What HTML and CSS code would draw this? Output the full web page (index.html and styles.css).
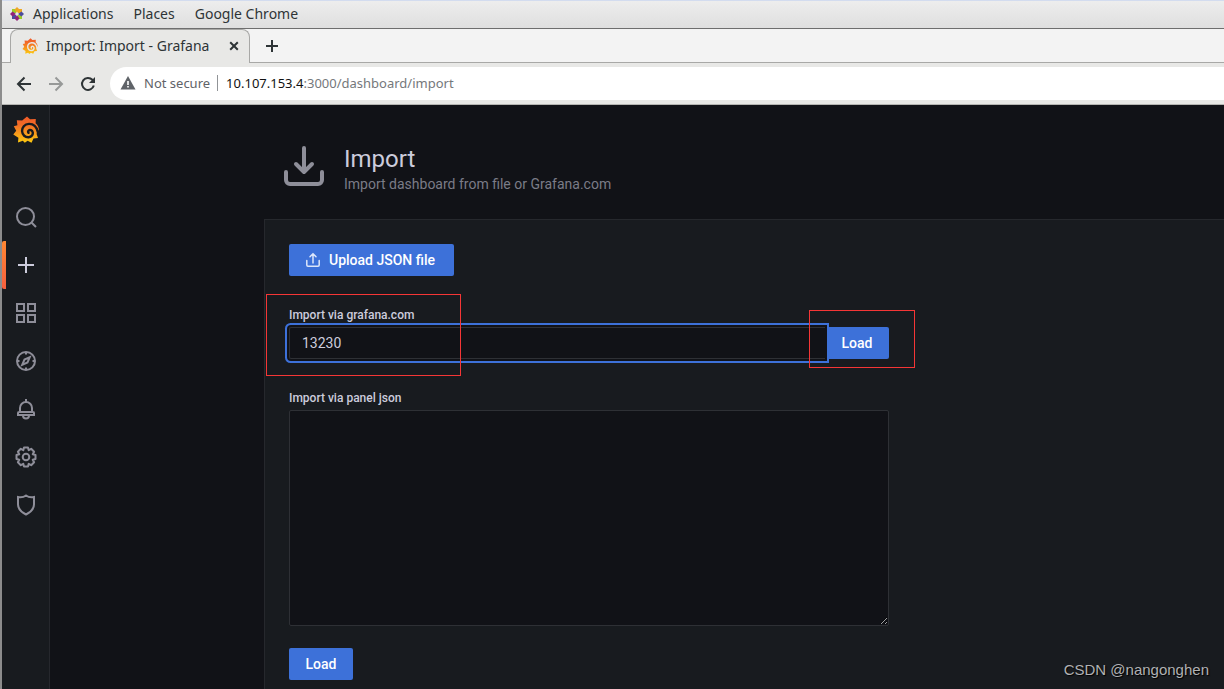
FILE: index.html
```html
<!DOCTYPE html>
<html lang="en">
<head>
<meta charset="utf-8">
<title>Import: Import - Grafana</title>
<link rel="stylesheet" href="styles.css">
</head>
<body>
<svg class="defs" width="0" height="0" aria-hidden="true">
  <defs>
    <linearGradient id="flame" x1="0" y1="0" x2="0" y2="1"><stop offset="0" stop-color="#f05a28"/><stop offset=".3" stop-color="#f26b27"/><stop offset="1" stop-color="#fcc90f"/></linearGradient>
    <symbol id="grafana" viewBox="0 0 26 27">
      <path fill="url(#flame)" d="M14 0.5 17 3.2 22.8 3 22.6 7.2C24.8 9.3 26 11.6 25.9 14.6L24.4 14.5 23.6 18 25 22 20.5 22.5 18.5 26.7 14.6 24.8 11.8 26.8 9.8 24.8 5 26.4 5.4 21.8 0.3 18.4 3.2 14.8 0.8 10.2 4.4 9.2 3.8 4.3 9.2 4.6Z"/>
      <path class="spiral" d="M25 16.500C23.700 10.500 20 7.800 16 7.900 11.500 8.100 8.900 11.500 9.100 15.200 9.300 19 12.300 21.500 15.700 21.200 18.700 20.900 20.200 18.600 19.700 16.300 19.200 14.200 16.900 13.400 15.600 14.600 14.800 15.400 15 16.300 15.500 16.800"/>
    </symbol>
  </defs>
</svg>

<div class="desktop">
  <header class="desktop-bar">
    <svg class="distro" viewBox="0 0 14 14" aria-hidden="true">
      <path fill="#9ccd2a" d="M2 2h4v4H2z"/><path fill="#efa724" d="M8 2h4v4H8z"/><path fill="#4d4c9c" d="M2 8h4v4H2z"/><path fill="#9ccd2a" d="M8 8h4v4H8z"/>
      <path fill="#efa724" d="m7 0 2.500 2.500L7 6 4.500 2.500z"/><path fill="#4d4c9c" d="m14 7-2.500 2.500L8 7l3.500-2.500z"/><path fill="#932279" d="m7 14-2.500-2.500L7 8l2.500 3.500z"/><path fill="#932279" d="m0 7 2.500-2.500L6 7 2.500 9.500z"/>
    </svg>
    <nav class="desktop-menu">
      <a href="#apps">Applications</a><a href="#places">Places</a><a href="#chrome">Google Chrome</a>
    </nav>
  </header>

  <div class="tab-strip">
    <div class="tab">
      <svg class="favicon" aria-hidden="true"><use href="#grafana"/></svg>
      <span class="tab-title">Import: Import - Grafana</span>
      <button class="plain" type="button" aria-label="Close tab"><svg width="10" height="10" viewBox="0 0 10 10"><path d="m1.200 1.200 7.600 7.600m0-7.600L1.200 8.800"/></svg></button>
    </div>
    <button class="plain new-tab" type="button" aria-label="New tab"><svg width="12" height="12" viewBox="0 0 12 12"><path d="M6 0v12M0 6h12"/></svg></button>
  </div>

  <div class="toolbar">
    <button class="plain" type="button" aria-label="Back"><svg width="16" height="16" viewBox="0 0 16 16"><path d="M15 8H2m6.500-6.500L2 8l6.500 6.500"/></svg></button>
    <button class="plain faded" type="button" aria-label="Forward"><svg width="16" height="16" viewBox="0 0 16 16"><path d="M1 8h13M7.500 1.500 14 8l-6.500 6.500"/></svg></button>
    <button class="plain" type="button" aria-label="Reload"><svg width="16" height="16" viewBox="0 0 16 16"><path d="M13.800 9.500A6 6 0 1 1 12.400 3.800l1.500 1.500"/><path class="solid" d="M15 1v6H9z"/></svg></button>
    <div class="address">
      <svg width="16" height="14" viewBox="0 0 16 14" aria-hidden="true"><path fill="#5f6368" d="M8 0 15.500 13.500H.5z"/><path fill="#fff" d="M7.200 5h1.600v4H7.200zm0 5h1.600v1.600H7.200z"/></svg>
      <span class="security">Not secure</span>
      <span class="url"><b>10.107.153.4</b>:3000/dashboard/import</span>
    </div>
  </div>

  <div class="app">
    <nav class="sidebar" aria-label="Main">
      <a class="brand" href="#home" aria-label="Home"><svg width="26" height="27"><use href="#grafana"/></svg></a>
      <a href="#search" aria-label="Search"><svg viewBox="0 0 24 24"><circle cx="11.500" cy="11.500" r="8.500"/><path d="m17.700 17.700 4.300 4.300"/></svg></a>
      <a class="current" href="#create" aria-label="Create"><svg viewBox="0 0 24 24"><path d="M12 4v16M4 12h16"/></svg></a>
      <a href="#dashboards" aria-label="Dashboards"><svg viewBox="0 0 24 24"><path d="M3 3h7v7H3zM14 3h7v7h-7zM3 14h7v7H3zM14 14h7v7h-7z"/></svg></a>
      <a href="#explore" aria-label="Explore"><svg viewBox="0 0 24 24"><circle cx="12" cy="12" r="9"/><path d="M12 3v2.500M12 18.500V21M3 12h2.500M18.500 12H21M15.800 8.200l-2.300 5.300-5.300 2.300 2.300-5.300z"/></svg></a>
      <a href="#alerting" aria-label="Alerting"><svg viewBox="0 0 24 24"><path d="M12 2v3M6 15v-4a6 6 0 0 1 12 0v4M5 15h14a1 1 0 0 1 1 1v2H4v-2a1 1 0 0 1 1-1zM9 18.500a3 3 0 0 0 6 0"/></svg></a>
      <a href="#configuration" aria-label="Configuration"><svg viewBox="0 0 24 24"><circle cx="12" cy="12" r="3.300"/><path stroke-linejoin="round" d="M10 2.500h4l.7 2.700 2.500-1.400 2.900 2.900-1.400 2.500 2.800.8v4l-2.800.8 1.400 2.500-2.900 2.900-2.500-1.400-.7 2.700h-4l-.7-2.700-2.500 1.400-2.900-2.900 1.400-2.500-2.800-.8v-4l2.800-.8-1.400-2.500 2.900-2.900 2.500 1.400z"/></svg></a>
      <a href="#admin" aria-label="Server admin"><svg viewBox="0 0 24 24"><path d="M4 4q4.500 1 8-1.500Q15.500 5 20 4v7.500c0 4.500-3 7.500-8 10-5-2.500-8-5.500-8-10z"/></svg></a>
    </nav>

    <main class="page">
      <header class="page-header">
        <svg width="40" height="40" viewBox="0 0 40 40" aria-hidden="true"><path d="M20 2v22M12 18l8 8 8-8M2 26v8a4 4 0 0 0 4 4h28a4 4 0 0 0 4-4v-8"/></svg>
        <div>
          <h1>Import</h1>
          <p>Import dashboard from file or Grafana.com</p>
        </div>
      </header>
      <form class="panel">
        <button class="primary upload" type="button"><svg width="16" height="16" viewBox="0 0 16 16" aria-hidden="true"><path d="M8 11V2M5 4.700 8 1.700l3 3M1.800 8.500V13a1.200 1.200 0 0 0 1.200 1.200h10a1.200 1.200 0 0 0 1.200-1.200V8.500"/></svg>Upload JSON file</button>
        <div class="field">
          <label for="dashboard-id">Import via grafana.com</label>
          <div class="input-row">
            <input id="dashboard-id" type="text" value="13230">
            <button class="primary" type="button">Load</button>
          </div>
          <span class="mark mark-id"></span>
          <span class="mark mark-load"></span>
        </div>
        <div class="field">
          <label for="panel-json">Import via panel json</label>
          <textarea id="panel-json"></textarea>
        </div>
        <button class="primary" type="button">Load</button>
      </form>
    </main>
  </div>
</div>
<div class="watermark">CSDN @nangonghen</div>
</body>
</html>
```
FILE: styles.css
```css
* { box-sizing: border-box; }

body {
  margin: 0;
  background: #111217;
  color: #ccccdc;
  font: 14px/20px Roboto, sans-serif;
}

svg { display: block; flex: none; }
.defs { position: absolute; }
a { color: inherit; text-decoration: none; }

.spiral { fill: none; stroke: var(--hole, #181b1f); stroke-width: 2.4; stroke-linecap: round; }

.desktop {
  display: flex;
  flex-direction: column;
  height: 100vh;
  overflow: hidden;
  border-left: 2px solid #8c8c8c;
}

.desktop-bar {
  display: flex;
  flex: none;
  align-items: center;
  gap: 9px;
  height: 29px;
  padding: 0 0 2px 8px;
  background: linear-gradient(#ededed, #dfdfdf);
  border-top: 1px solid #d3dcef;
  border-bottom: 1px solid #6e6e6e;
  color: #2e3436;
  font: 14px/20px "Noto Sans", sans-serif;
}
.distro { width: 14px; height: 14px; }
.desktop-menu { display: flex; gap: 20px; }

.plain {
  display: grid;
  place-items: center;
  width: 16px;
  height: 16px;
  padding: 0;
  border: 0;
  background: none;
}
.plain path { fill: none; stroke: #2e3436; stroke-width: 2; }
.plain .solid { fill: #2e3436; stroke: none; }
.plain.faded path { stroke: #979998; }

.tab-strip {
  display: flex;
  flex: none;
  align-items: center;
  gap: 14px;
  height: 34px;
  padding-left: 8px;
  background: #f3f3f3;
  border-bottom: 1px solid #a8a8a6;
}
.tab {
  display: flex;
  align-items: center;
  gap: 8px;
  width: 240px;
  height: 34px;
  margin-bottom: -1px;
  padding: 0 7px 2px 11px;
  background: #e8e8e6;
  border: 1px solid #a8a8a6;
  border-bottom: 0;
  border-radius: 8px 8px 0 0;
  color: #2e3436;
  font: 14px/20px "Noto Sans", sans-serif;
}
.tab-title { flex: 1; white-space: nowrap; }
.favicon { --hole: #e8e8e6; width: 16px; height: 16px; }

.toolbar {
  display: flex;
  flex: none;
  align-items: center;
  gap: 16px;
  height: 42px;
  padding-left: 14px;
  background: #e8e8e6;
  border-bottom: 1px solid #b5b5b2;
}
.address {
  display: flex;
  flex: 1;
  align-items: center;
  gap: 8px;
  height: 33px;
  margin-left: -2px;
  padding: 0 0 1px 10px;
  background: #fff;
  border-radius: 17px 0 0 17px;
  color: #75787b;
  font: 13px/16px "Noto Sans", sans-serif;
}
.security { padding-right: 7px; border-right: 1px solid #919497; color: #5f6368; }
.url b { color: #111; font-weight: 400; }

.app { display: flex; flex: 1; min-height: 0; }

.sidebar {
  flex: none;
  width: 48px;
  background: #181b1f;
  border-right: 1px solid #26282d;
}
.sidebar a {
  display: grid;
  place-items: center;
  height: 48px;
  border-left: 4px solid transparent;
  padding-right: 3px;
}
.sidebar a svg { width: 24px; height: 24px; fill: none; stroke: #8e8e99; stroke-width: 2; }
.sidebar .brand { height: 48px; margin-bottom: 40px; }
.sidebar .brand svg { width: 26px; height: 27px; stroke: none; }
.sidebar .current {
  background: linear-gradient(#ff8833, #f55f3e) left / 4px 100% no-repeat border-box;
  border-radius: 2px;
}
.sidebar .current svg { stroke: #ccccdc; }

.page { display: flex; flex: 1; flex-direction: column; min-width: 0; padding-left: 214px; }

.page-header { display: flex; gap: 20px; padding: 41px 20px 25px; }
.page-header path {
  fill: none;
  stroke: #8e8e99;
  stroke-width: 4;
  stroke-linecap: round;
  stroke-linejoin: round;
}
h1 { margin: 0; font-size: 24px; font-weight: 400; line-height: 26px; }
p { margin: 2px 0 0; color: #7b7c87; }

.panel {
  flex: 1;
  padding: 24px;
  background: #181b1f;
  border: solid #26282d;
  border-width: 1px 0 0 1px;
}

.primary {
  display: flex;
  align-items: center;
  justify-content: center;
  gap: 8px;
  min-width: 64px;
  height: 32px;
  padding: 0 12px;
  border: 0;
  border-radius: 2px;
  background: #3d71d9;
  color: #fff;
  font: 500 14px/20px Roboto, sans-serif;
}
.primary path { fill: none; stroke: #dce6fa; stroke-width: 1.5; stroke-linecap: round; }
.upload { min-width: 165px; justify-content: flex-start; padding: 0 16px; }

.field { position: relative; max-width: 600px; margin: 30px 0 22px; }
.field + .field { margin-top: 30px; }
label { display: block; padding-top: 1px; margin-bottom: 4px; font-size: 12px; font-weight: 500; line-height: 16px; }

.input-row { display: flex; }
.input-row input {
  position: relative;
  z-index: 1;
  flex: 1;
  min-width: 0;
  height: 32px;
  padding: 0 12px;
  border: 1px solid #2e3035;
  border-right: 0;
  border-radius: 2px 0 0 2px;
  outline: 0;
  background: #111217;
  box-shadow: 0 0 0 2px #111217, 0 0 0 4px #3d71d9;
  color: #ccccdc;
  font: 14px/20px Roboto, sans-serif;
}
.input-row .primary { border-radius: 0 2px 2px 0; }

textarea {
  display: block;
  width: 100%;
  height: 216px;
  border: 1px solid #2e3035;
  border-radius: 2px;
  background: #111217;
  color: #ccccdc;
  color-scheme: dark;
  resize: both;
}

.mark { position: absolute; z-index: 2; border: 1px solid #f53636; pointer-events: none; }
.mark-id { left: -23px; top: -12px; width: 195px; height: 82px; }
.mark-load { right: -26px; top: 4px; width: 106px; height: 58px; }

.watermark {
  position: absolute;
  right: 15px;
  bottom: 9px;
  color: #b0b1b3;
  font: 15px/20px "Liberation Sans", sans-serif;
  text-shadow: 1px 1px 1px #000;
}
```
